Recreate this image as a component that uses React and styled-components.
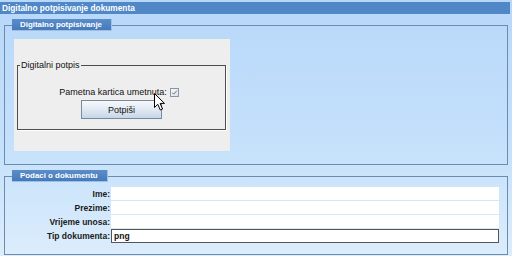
import styled, { createGlobalStyle } from 'styled-components';

const GlobalStyle = createGlobalStyle`
  html, body {
    margin: 0;
    padding: 0;
  }
  body {
    font-family: "Liberation Sans", Arial, sans-serif;
  }
`;

const fields = [
  { label: 'Ime:', value: '' },
  { label: 'Prezime:', value: '' },
  { label: 'Vrijeme unosa:', value: '' },
  { label: 'Tip dokumenta:', value: 'png', framed: true },
];

const App = () => {
  return (
    <StyledPage>
      <GlobalStyle />
      <TitleBar>Digitalno potpisivanje dokumenta</TitleBar>

      <Section $top={5} $bottom={13}>
        <Tab>Digitalno potpisivanje</Tab>
        <SwingPanel>
          <EtchedSet>
            <EtchedTitle>Digitalni potpis</EtchedTitle>
            <CardRow>
              <span>Pametna kartica umetnuta:</span>
              <CheckBox checked />
            </CardRow>
            <SignButton>Potpiši</SignButton>
          </EtchedSet>
        </SwingPanel>
      </Section>

      <Section $top={5} $bottom={11}>
        <Tab>Podaci o dokumentu</Tab>
        <FieldGrid>
          {fields.map(f => (
            <FieldRow key={f.label}>
              <FieldLabel>{f.label}</FieldLabel>
              <FieldValue $framed={f.framed}>{f.value}</FieldValue>
            </FieldRow>
          ))}
        </FieldGrid>
      </Section>

      <Pointer width="12" height="19" viewBox="0 0 12 19">
        <path
          d="M0.5 0.5 L0.5 14.5 L3.8 11.3 L6.3 17 L8.6 16 L6.1 10.4 L10.5 10.4 Z"
          fill="#fff"
          stroke="#000"
          strokeWidth="1"
          strokeLinejoin="miter"
        />
      </Pointer>
    </StyledPage>
  );
}

const CheckBox = ({ checked }) => (
  <StyledCheck width="9" height="9" viewBox="0 0 9 9">
    <defs>
      <linearGradient id="cbg" x1="0" y1="0" x2="1" y2="1">
        <stop offset="0" stopColor="#fafbfc" />
        <stop offset="1" stopColor="#d9dfe6" />
      </linearGradient>
    </defs>
    <rect x="0.5" y="0.5" width="8" height="8" fill="url(#cbg)" stroke="#8a96a3" />
    {checked &&
      <path d="M2.2 4.6 L3.7 6.2 L6.9 2.6" fill="none" stroke="#6b7480" strokeWidth="1" />
    }
  </StyledCheck>
);

export default App;



const StyledPage = styled.div`
  position: relative;
  width: 512px;
  height: 256px;
  overflow: hidden;
  box-sizing: border-box;
  padding-top: 2px;
  background: linear-gradient(180deg, #b8d8fa 0%, #c4e0fb 55%, #dcedfc 100%);
`;

const TitleBar = styled.div`
  width: 510px;
  height: 12px;
  box-sizing: border-box;
  padding-left: 2px;
  background: #5087c6;
  color: #fff;
  font-size: 8.3px;
  font-weight: bold;
  line-height: 12px;
  white-space: nowrap;
`;

const Section = styled.fieldset`
  width: 504px;
  min-width: 0;
  box-sizing: border-box;
  margin: ${p => p.$top}px 0 0 4px;
  padding: 0 0 ${p => p.$bottom}px 0;
  border: 1px solid #6b8bb1;
`;

const Tab = styled.legend`
  height: 12px;
  box-sizing: border-box;
  margin-left: 7px;
  padding: 0 9px 0 8px;
  background: linear-gradient(180deg, #5a8dc9 0%, #4679b9 100%);
  border-right: 1px solid #9cc0e6;
  border-bottom: 1px solid #9cc0e6;
  color: #fff;
  font-size: 7.9px;
  font-weight: bold;
  line-height: 12px;
  white-space: nowrap;
`;

const SwingPanel = styled.div`
  width: 216px;
  height: 112px;
  box-sizing: border-box;
  margin: 8px 0 0 9px;
  padding: 21px 0 0 3px;
  background: #eeeeee;
`;

const EtchedSet = styled.fieldset`
  width: 209px;
  min-width: 0;
  box-sizing: border-box;
  margin: 0;
  padding: 16px 0 10px 0;
  border: 1px solid #4e4e4e;
  box-shadow: 1px 1px 0 #ffffff;
  display: flex;
  flex-direction: column;
  align-items: center;
  gap: 2px;
  color: #111;
  font-size: 9px;
`;

const EtchedTitle = styled.legend`
  margin-left: 2px;
  padding: 0 1px;
  font-size: 9px;
  line-height: 11px;
  color: #111;
`;

const CardRow = styled.div`
  display: flex;
  align-items: center;
  gap: 3px;
  height: 11px;
  line-height: 11px;
  margin-left: -5px;
  white-space: nowrap;
`;

const StyledCheck = styled.svg`
  display: block;
`;

const SignButton = styled.button`
  width: 81px;
  height: 19px;
  padding: 0;
  border: 1px solid #7a8a99;
  border-radius: 0;
  background: linear-gradient(180deg, #f7f9fc 0%, #e3ebf4 45%, #c6d6e8 100%);
  color: #111;
  font-family: "Liberation Sans", Arial, sans-serif;
  font-size: 9px;
  font-weight: normal;
`;

const FieldGrid = styled.div`
  display: flex;
  flex-direction: column;
  gap: 1px;
  margin-top: 5px;
`;

const FieldRow = styled.div`
  display: grid;
  grid-template-columns: 106px 388px;
  align-items: center;
`;

const FieldLabel = styled.div`
  text-align: right;
  padding-right: 1px;
  color: #1b1b1b;
  font-size: 8.5px;
  font-weight: bold;
  white-space: nowrap;
`;

const FieldValue = styled.div`
  height: ${p => (p.$framed ? 14 : 13)}px;
  box-sizing: border-box;
  padding-left: 2px;
  background: #fff;
  border: ${p => (p.$framed ? '1px solid #555' : 'none')};
  color: #111;
  font-size: 8.5px;
  font-weight: bold;
  line-height: 12px;
`;

const Pointer = styled.svg`
  position: absolute;
  left: 154px;
  top: 93px;
`;
